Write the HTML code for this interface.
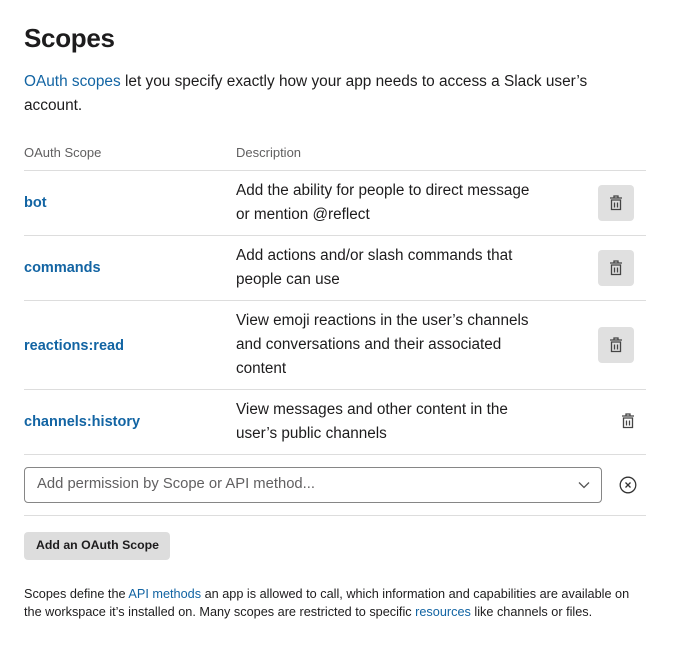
<!DOCTYPE html>
<html><head><meta charset="utf-8"><style>
*{margin:0;padding:0;box-sizing:border-box}
body{width:673px;height:645px;background:#fff;font-family:"Liberation Sans",sans-serif;color:#1d1c1d;position:relative;overflow:hidden}
.a{position:absolute;white-space:nowrap}
a{color:#1264a3;text-decoration:none}
.h{left:24px;top:23px;font-size:26px;font-weight:bold;letter-spacing:-0.3px}
.p{font-size:15.4px;line-height:24px}
.th{font-size:13px;color:#616061;top:145px}
.hr{position:absolute;left:24px;width:622px;height:1px;background:#dddddd}
.sc{left:24px;font-size:14.5px;font-weight:bold;color:#1264a3}
.d{left:236px;font-size:15.3px;line-height:24px;color:#1d1c1d}
.btn{position:absolute;left:598px;width:36px;height:36px;background:#e0e0e0;border-radius:4px}
.btn svg,.ic svg{position:absolute;left:11px;top:10px}
.ic{position:absolute;width:36px;height:36px}
</style></head><body>
<div class="a h">Scopes</div>
<div class="a p" style="left:24px;top:70px"><a>OAuth scopes</a> let you specify exactly how your app needs to access a Slack user’s<br>account.</div>
<div class="a th" style="left:24px">OAuth Scope</div>
<div class="a th" style="left:236px">Description</div>
<div class="hr" style="top:170px"></div>
<div class="a sc" style="top:195px">bot</div>
<div class="a d" style="top:179px">Add the ability for people to direct message<br>or mention @reflect</div>
<div class="btn" style="top:185px"><svg width="14" height="16" viewBox="0 0 14 16" fill="none" stroke="#444" stroke-width="1.3"><path d="M5 2.5V1h4v1.5M1 3h12M2.5 5h9v9.5h-9zM5.5 7.5v5M8.5 7.5v5"/></svg></div>
<div class="hr" style="top:235px"></div>
<div class="a sc" style="top:260px">commands</div>
<div class="a d" style="top:244px">Add actions and/or slash commands that<br>people can use</div>
<div class="btn" style="top:250px"><svg width="14" height="16" viewBox="0 0 14 16" fill="none" stroke="#444" stroke-width="1.3"><path d="M5 2.5V1h4v1.5M1 3h12M2.5 5h9v9.5h-9zM5.5 7.5v5M8.5 7.5v5"/></svg></div>
<div class="hr" style="top:300px"></div>
<div class="a sc" style="top:338px">reactions:read</div>
<div class="a d" style="top:309px">View emoji reactions in the user’s channels<br>and conversations and their associated<br>content</div>
<div class="btn" style="top:327px"><svg width="14" height="16" viewBox="0 0 14 16" fill="none" stroke="#444" stroke-width="1.3"><path d="M5 2.5V1h4v1.5M1 3h12M2.5 5h9v9.5h-9zM5.5 7.5v5M8.5 7.5v5"/></svg></div>
<div class="hr" style="top:389px"></div>
<div class="a sc" style="top:414px">channels:history</div>
<div class="a d" style="top:398px">View messages and other content in the<br>user’s public channels</div>
<div class="ic" style="left:610px;top:403px"><svg width="14" height="16" viewBox="0 0 14 16" fill="none" stroke="#444" stroke-width="1.3"><path d="M5 2.5V1h4v1.5M1 3h12M2.5 5h9v9.5h-9zM5.5 7.5v5M8.5 7.5v5"/></svg></div>
<div class="hr" style="top:454px"></div>
<div style="position:absolute;left:24px;top:467px;width:578px;height:36px;border:1px solid #868686;border-radius:4px"></div>
<div class="a" style="left:37px;top:476px;font-size:14.8px;color:#616061">Add permission by Scope or API method...</div>
<svg style="position:absolute;left:578px;top:481px" width="12" height="8" viewBox="0 0 12 8" fill="none" stroke="#555" stroke-width="1.3"><path d="M1 1.5l5 5 5-5"/></svg>
<svg style="position:absolute;left:619px;top:476px" width="18" height="18" viewBox="0 0 18 18" fill="none" stroke="#333" stroke-width="1.3"><circle cx="9" cy="9" r="7.8"/><path d="M6.5 6.5l5 5M11.5 6.5l-5 5"/></svg>
<div class="hr" style="top:515px"></div>
<div style="position:absolute;left:24px;top:532px;width:146px;height:28px;background:#dddddd;border-radius:4px"></div>
<div class="a" style="left:36px;top:538px;font-size:12.3px;font-weight:bold;color:#1d1c1d">Add an OAuth Scope</div>
<div class="a" style="left:24px;top:585px;font-size:12.7px;line-height:18px">Scopes define the <a>API methods</a> an app is allowed to call, which information and capabilities are available on<br>the workspace it’s installed on. Many scopes are restricted to specific <a>resources</a> like channels or files.</div>
</body></html>
